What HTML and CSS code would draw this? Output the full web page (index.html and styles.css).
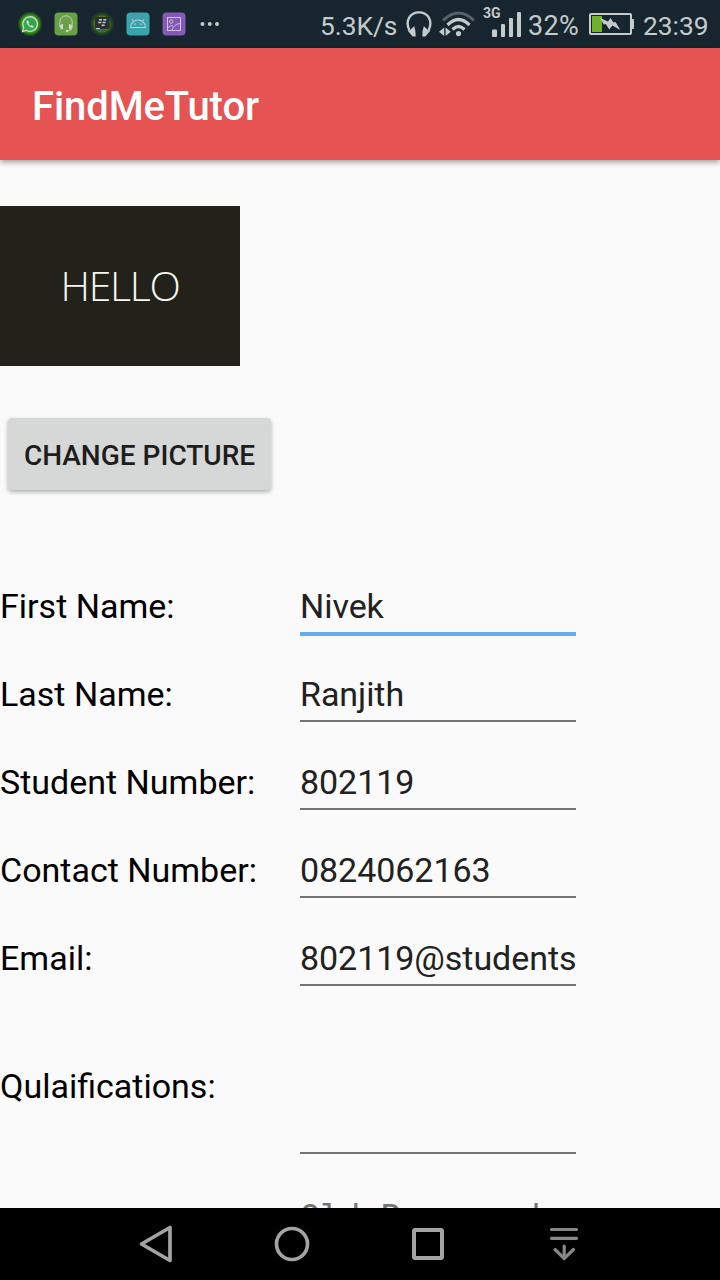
FILE: index.html
```html
<!DOCTYPE html>
<html lang="en">
<head>
<meta charset="utf-8">
<title>FindMeTutor</title>
<link rel="stylesheet" href="styles.css">
</head>
<body>
<div class="screen">
  <div class="status">
    <div class="notifications">
      <svg width="24" height="24" viewBox="0 0 24 24">
        <defs><radialGradient id="glow"><stop offset=".6" stop-color="#43b80f"/><stop offset="1" stop-color="#43b80f" stop-opacity="0"/></radialGradient></defs>
        <circle cx="12" cy="12" r="12.5" fill="url(#glow)"/>
        <path d="M4.500 19.500l1.200-4A7.300 7.300 0 1 1 8.500 18.400z" fill="#35a64b" stroke="#ccd5d0" stroke-width="1.300"/>
        <path d="M9.500 8.300c-1 .4-1.200 1.400-.8 2.500.8 2.200 2.500 3.900 4.700 4.700 1.200.4 2.200 0 2.500-1l-2.100-1.500-1 1c-1-.5-2-1.500-2.500-2.500l.9-1z" fill="#d6ddd9"/>
      </svg>
      <svg width="24" height="24" viewBox="0 0 24 24">
        <rect x=".5" y=".5" width="23" height="23" rx="4" fill="#67a046"/>
        <path d="M5.800 15V10a6.200 6.200 0 0 1 12.400 0v5q0 4-4 4" fill="none" stroke="#c5ceb9" stroke-width="1"/>
        <path d="M9 12q-3 0-3 2.500T9 17.500zM15 12q3 0 3 2.500t-3 3z" fill="#d2d8cb"/><circle cx="13" cy="19" r="1.200" fill="#d2d8cb"/>
      </svg>
      <svg width="24" height="24" viewBox="0 0 24 24">
        <defs><radialGradient id="ring"><stop offset=".5" stop-color="#326b18"/><stop offset="1" stop-color="#2f7914" stop-opacity="0"/></radialGradient></defs>
        <circle cx="12" cy="12" r="12.500" fill="url(#ring)"/><circle cx="12" cy="12" r="8" fill="none" stroke="#68732c" stroke-width=".8"/>
        <path d="M7 16h12v2h-7l-3 2v-2H7z" fill="#1679a6"/>
        <rect x="5" y="5" width="14.500" height="12" rx="2" fill="#292e31"/>
        <path d="M9 7.800h3M13.300 7.800h3M8.300 10.500h3M12.600 10.500h3M11.600 13.200h3" stroke="#c7cdcf" stroke-width="1.600"/><path d="M6 16.500h4" stroke="#c7cdcf"/>
      </svg>
      <svg width="24" height="24" viewBox="0 0 24 24">
        <rect x=".5" y=".5" width="23" height="23" rx="4" fill="#3ca3ad"/>
        <path d="M4.500 15.500a7.500 7.500 0 0 1 15 0zM6 7.500l2 2.500M18 7.500L16 10" fill="none" stroke="#bad1d5" stroke-width="1.100"/><path d="M8.300 12.200h1.400M14.300 12.200h1.400" stroke="#bad1d5" stroke-width="1.300"/>
      </svg>
      <svg width="24" height="24" viewBox="0 0 24 24">
        <rect x=".5" y=".5" width="23" height="23" rx="4" fill="#855ab6"/>
        <rect x="5.500" y="5.500" width="13" height="13" fill="none" stroke="#cbc1dc"/><circle cx="9.200" cy="9.500" r="1.700" fill="none" stroke="#cbc1dc"/>
        <path d="M6 15.500q3-3 5-1.500M10 18q2-6 8.500-6.500" fill="none" stroke="#cbc1dc"/>
      </svg>
      <svg width="24" height="24" viewBox="0 0 24 24" fill="#c5cacc"><circle cx="4.500" cy="12" r="2"/><circle cx="11.800" cy="12" r="2"/><circle cx="19" cy="12" r="2"/></svg>
    </div>
    <div class="system">
      <span class="speed">5.3K/s</span>
      <svg class="headphones" width="26" height="26" viewBox="0 0 26 26">
        <path d="M3.500 19.500C-1.500 9 4.500 1.400 13 1.400S27.500 9 22.500 19.500" fill="none" stroke="#c5cacc" stroke-width="2.400"/>
        <path d="M8.200 15.200q1.800 5 1.500 10.200H6.600L1.300 19.200q2.500 1 3.700-1 1.200-1.700 3.200-3zM17.800 15.200q-1.800 5-1.500 10.200h3.100l5.300-6.200q-2.500 1-3.700-1-1.200-1.700-3.200-3z" fill="#c5cacc"/>
      </svg>
      <svg class="wifi" width="37" height="26" viewBox="0 0 37 26">
        <path d="M4 9.500Q19.500-5.500 35 9.500" fill="none" stroke="#566269" stroke-width="2.800"/>
        <path d="M8.500 14Q19.500 3 30.500 14" fill="none" stroke="#c5cacc" stroke-width="3.200"/>
        <path d="M13.500 18.500Q19.500 12.500 25.500 18.500" fill="none" stroke="#c5cacc" stroke-width="3.200"/>
        <circle cx="19.500" cy="22.600" r="2.600" fill="#c5cacc"/><path d="M5.200 16.500v8.500L0 20.800zM6.600 16.500v8.500l5.200-4.200z" fill="#c5cacc"/>
      </svg>
      <div class="signal">
        <span class="network">3G</span>
        <svg width="30" height="26" viewBox="0 0 30 26" fill="#c5cacc"><rect x="0" y="17.500" width="5" height="7.500" rx="1"/><rect x="9" y="12" width="4" height="13" rx="1"/><rect x="17" y="6" width="4" height="19" rx="1"/><rect x="25" y="0" width="4" height="25" rx="1"/></svg>
      </div>
      <span class="percent">32%</span>
      <svg class="battery" width="46" height="22" viewBox="0 0 46 22">
        <rect x="1" y="1" width="41" height="20" rx="1" fill="none" stroke="#c5cacc" stroke-width="2"/><path d="M43 6h1q1 0 1 1v8q0 1-1 1h-1z" fill="#c5cacc"/>
        <rect x="3" y="3" width="10" height="16" fill="#70b12c"/><path d="M11 5l8 3.500L21.500 5l3 4.500 2-.5 4.800 8-8-4.500-3 4-3.500-5.500-2 .5z" fill="#c5cacc"/>
      </svg>
      <span class="clock">23:39</span>
    </div>
  </div>
  <header class="appbar"><h1 class="title">FindMeTutor</h1></header>
  <main class="content">
    <div class="picture"><span class="hello">HELLO</span></div>
    <button class="change">CHANGE PICTURE</button>
    <div class="form">
      <div class="row"><span class="label">First Name:</span><span class="field focused">Nivek</span></div>
      <div class="row"><span class="label">Last Name:</span><span class="field">Ranjith</span></div>
      <div class="row"><span class="label">Student Number:</span><span class="field">802119</span></div>
      <div class="row"><span class="label">Contact Number:</span><span class="field">0824062163</span></div>
      <div class="row"><span class="label">Email:</span><span class="field">802119@students</span></div>
      <div class="row tall"><span class="label">Qulaifications:</span><span class="field"></span></div>
      <div class="row password"><span class="label"></span><span class="hint">Old Password</span></div>
    </div>
  </main>
  <nav class="navbar">
    <svg width="36" height="40" viewBox="0 0 36 40"><path d="M32 3.500v33L3.500 20z" fill="none" stroke="#a3a3a3" stroke-width="3.700" stroke-linejoin="round"/></svg>
    <svg width="36" height="40" viewBox="0 0 36 40"><circle cx="18" cy="20" r="15.500" fill="none" stroke="#a3a3a3" stroke-width="3.700"/></svg>
    <svg width="36" height="40" viewBox="0 0 36 40"><rect x="4" y="6" width="28" height="28" rx="1" fill="none" stroke="#a3a3a3" stroke-width="4"/></svg>
    <svg width="36" height="40" viewBox="0 0 36 40"><path d="M5.500 5.500h25M5.500 14.300h25M18.200 22v12M9 25.500l9.200 9 9.300-9" fill="none" stroke="#878787" stroke-width="3.200" stroke-linecap="round"/></svg>
  </nav>
</div>
</body>
</html>
```
FILE: styles.css
```css
* { box-sizing: border-box; }
body { margin: 0; font-family: Roboto, "Liberation Sans", sans-serif; }
svg { display: block; flex: none; }
.screen { width: 720px; height: 1280px; display: flex; flex-direction: column; overflow: hidden; background: #fafafa; }
.status { height: 48px; flex: none; display: flex; justify-content: space-between; background: #17262e; color: #c5cacc; font-size: 26.3px; }
.notifications { display: flex; align-items: center; gap: 12px; padding-left: 18px; }
.system { display: flex; align-items: center; width: 400px; line-height: 32px; white-space: nowrap; }
.system span { padding-top: 3px; }
.speed { width: 86px; }
.wifi { margin-left: 7px; }
.signal { display: flex; width: 45px; margin-left: 7px; height: 48px; }
.signal svg { margin-top: 12px; margin-left: -9px; }
.system .network { width: 18px; padding-top: 5px; font-size: 14px; line-height: 16px; font-weight: 700; }
.percent { width: 61px; font-size: 27px; letter-spacing: .3px; }
.battery { margin-right: 8px; }
.appbar { height: 112px; flex: none; display: flex; align-items: center; padding: 6px 32px 0; background: #e55353; box-shadow: 0 2px 6px rgba(0,0,0,.4); z-index: 1; }
.title { margin: 0; color: #fff; font-size: 40px; font-weight: 500; line-height: 48px; letter-spacing: -.1px; }
.content { flex: 1; min-height: 0; overflow: hidden; padding-top: 46px; }
.picture { width: 240px; height: 160px; display: flex; align-items: center; justify-content: center; padding-bottom: 2px; background: #22211a; }
.hello { color: #f7f7f2; font-family: "Open Sans", sans-serif; font-size: 41px; font-weight: 300; line-height: 48px; letter-spacing: -1.3px; }
.change { display: block; width: 263px; height: 72px; margin: 52px 0 0 8px; padding: 3px 0 0; border: 0; border-radius: 4px; background: #d6d7d7; color: #1d1d1d; font: 500 28px/34px Roboto, sans-serif; white-space: nowrap; box-shadow: 0 2px 4px rgba(0,0,0,.3); }
.form { margin-top: 72px; font-size: 34px; line-height: 40px; }
.row { display: grid; grid-template-columns: 300px 276px; height: 88px; color: #000; }
.label { padding-top: 24px; white-space: nowrap; }
.field { height: 72px; padding-top: 24px; border-bottom: 2px solid #757575; color: #212121; white-space: nowrap; letter-spacing: -.05px; }
.field.focused { height: 74px; border-bottom: 4px solid #62aeef; }
.tall { height: 168px; }
.tall .label { padding-top: 64px; }
.tall .field { height: 152px; }
.hint { padding-top: 27px; color: #757575; font-family: "DejaVu Sans Mono", monospace; letter-spacing: -.45px; white-space: nowrap; }
.navbar { height: 72px; flex: none; display: flex; align-items: center; gap: 100px; padding-left: 138px; background: #000; }
```
